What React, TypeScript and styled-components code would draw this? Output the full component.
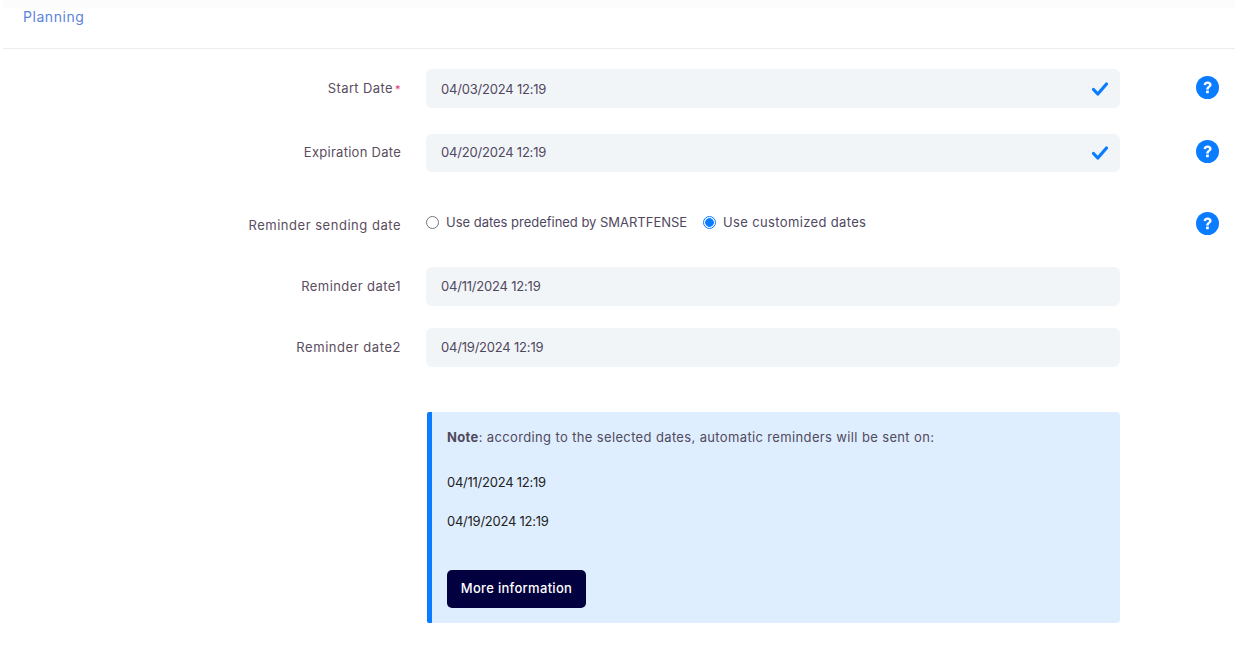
import React from "react";
import styled, { createGlobalStyle } from "styled-components";

const Global = createGlobalStyle`
  html, body { margin: 0; padding: 0; background: #fff; }
  body { font-family: Inter, "Noto Sans", sans-serif; font-size: 13px; color: #50485f; }
`;

const Page = styled.div`
  width: 1242px;
  height: 650px;
  overflow: hidden;
`;

const Header = styled.header`
  margin: 0 7px 0 3px;
  height: 49px;
  box-sizing: border-box;
  border-bottom: 1px solid #ebedf0;
  padding: 8px 0 0 20px;
  background: linear-gradient(#fcfcfc 0, #fcfcfc 8px, #fff 8px);
`;

const Title = styled.h2`
  margin: 0;
  font-size: 14px;
  font-weight: 400;
  line-height: 18px;
  letter-spacing: 0.55px;
  color: #5b83dc;
`;

const Row = styled.div<{ $h: number; $top: number }>`
  display: grid;
  grid-template-columns: 401px 719px 76px 23px;
  align-items: center;
  height: ${(p) => p.$h}px;
  margin-top: ${(p) => p.$top}px;
`;

const Label = styled.label<{ $shift?: number; $lift?: number; $track: number }>`
  text-align: right;
  font-size: 13px;
  line-height: 18px;
  letter-spacing: ${(p) => p.$track}px;
  color: #5a4d5e;
  padding-top: ${(p) => p.$shift ?? 0}px;
  padding-bottom: ${(p) => p.$lift ?? 0}px;
`;

const Required = styled.span`
  color: #e8336d;
  margin-left: 2px;
  font-size: 11px;
`;

const InputBox = styled.div`
  grid-column: 2;
  margin-left: 25px;
  height: 100%;
  box-sizing: border-box;
  display: flex;
  align-items: center;
  justify-content: space-between;
  padding: 0 11px 0 15px;
  background: #f2f5f8;
  border-radius: 6px;
  font-size: 13px;
  letter-spacing: -0.2px;
  color: #50485f;
`;

const Value = styled.span<{ $lift?: boolean }>`
  padding-bottom: ${(p) => (p.$lift ? 2 : 0)}px;
`;

const Radios = styled.div`
  grid-column: 2;
  margin-left: 25px;
  display: flex;
  align-items: center;
  gap: 16px;
  padding-bottom: 4px;
`;

const RadioOption = styled.span<{ $track: number }>`
  display: flex;
  align-items: center;
  gap: 7px;
  font-size: 13px;
  letter-spacing: ${(p) => p.$track}px;
  color: #50485f;
`;

const RadioMark = styled.span<{ $on?: boolean }>`
  width: 13px;
  height: 13px;
  box-sizing: border-box;
  border-radius: 50%;
  border: ${(p) => (p.$on ? "1.5px solid #0a7cff" : "1px solid #77767b")};
  background: ${(p) => (p.$on ? "radial-gradient(circle, #0a7cff 0 4px, #fff 4.6px)" : "#fff")};
`;

const Help = styled.span<{ $lift?: number }>`
  grid-column: 4;
  display: flex;
  width: 23px;
  height: 23px;
  margin-bottom: ${(p) => p.$lift ?? 0}px;
`;

const Note = styled.section`
  margin: 45px 0 0 427px;
  width: 693px;
  height: 211px;
  box-sizing: border-box;
  background: #dfeefe;
  border-left: 5px solid #0a7cff;
  border-radius: 2px 4px 4px 2px;
  padding: 16px 15px 0;
`;

const NoteText = styled.p`
  margin: 0;
  font-size: 13px;
  line-height: 18px;
  letter-spacing: 0.36px;
  color: #4f4a5c;
`;

const NoteDate = styled.p<{ $top: number }>`
  margin: ${(p) => p.$top}px 0 0;
  font-size: 13px;
  line-height: 18px;
  letter-spacing: -0.25px;
  color: #222;
`;

const MoreButton = styled.button`
  display: block;
  margin-top: 40px;
  width: 139px;
  height: 38px;
  padding: 0 0 2px;
  border: 0;
  border-radius: 5px;
  background: #03003f;
  color: #fff;
  font-family: inherit;
  font-size: 13px;
  font-weight: 500;
  letter-spacing: 0.3px;
`;

const Check = () => (
  <svg width="18" height="16" viewBox="0 0 18 16" aria-hidden="true">
    <path d="M2.5 8.5 L6.8 13 L15.5 3" fill="none" stroke="#0a7cff" strokeWidth="3.2" strokeLinecap="round" strokeLinejoin="round" />
  </svg>
);

const Question = () => (
  <svg width="23" height="23" viewBox="0 0 23 23" aria-hidden="true">
    <circle cx="11.5" cy="11.5" r="11.5" fill="#0a7cff" />
    <path d="M7.6 9 C7.6 6.7 9.4 5.4 11.6 5.4 C13.9 5.4 15.6 6.7 15.6 8.8 C15.6 11.2 12.8 11.3 12.8 13.4 L10.2 13.4 C10.2 10.4 13 10.3 13 9 C13 8.2 12.4 7.7 11.5 7.7 C10.6 7.7 10.1 8.3 10 9.3 Z" fill="#fff" />
    <rect x="10.1" y="14.6" width="2.7" height="2.7" rx="0.5" fill="#fff" />
  </svg>
);

export default function App() {
  return (
    <Page>
      <Global />
      <Header>
        <Title>Planning</Title>
      </Header>
      <Row $h={39} $top={20}>
        <Label $track={0.4}>Start Date<Required>*</Required></Label>
        <InputBox><Value>04/03/2024 12:19</Value><Check /></InputBox>
        <Help $lift={3}><Question /></Help>
      </Row>
      <Row $h={38} $top={26}>
        <Label $track={0.27} $lift={2}>Expiration Date</Label>
        <InputBox><Value $lift>04/20/2024 12:19</Value><Check /></InputBox>
        <Help $lift={3}><Question /></Help>
      </Row>
      <Row $h={30} $top={37}>
        <Label $track={0.52} $shift={2}>Reminder sending date</Label>
        <Radios>
          <RadioOption $track={-0.02}><RadioMark />Use dates predefined by SMARTFENSE</RadioOption>
          <RadioOption $track={0.35}><RadioMark $on />Use customized dates</RadioOption>
        </Radios>
        <Help $lift={2}><Question /></Help>
      </Row>
      <Row $h={39} $top={28}>
        <Label $track={0.42} $lift={2}>Reminder date1</Label>
        <InputBox><Value $lift>04/11/2024 12:19</Value></InputBox>
      </Row>
      <Row $h={39} $top={22}>
        <Label $track={0.55} $lift={2}>Reminder date2</Label>
        <InputBox><Value $lift>04/19/2024 12:19</Value></InputBox>
      </Row>
      <Note>
        <NoteText><strong>Note</strong>: according to the selected dates, automatic reminders will be sent on:</NoteText>
        <NoteDate $top={27}>04/11/2024 12:19</NoteDate>
        <NoteDate $top={21}>04/19/2024 12:19</NoteDate>
        <MoreButton>More information</MoreButton>
      </Note>
    </Page>
  );
}
